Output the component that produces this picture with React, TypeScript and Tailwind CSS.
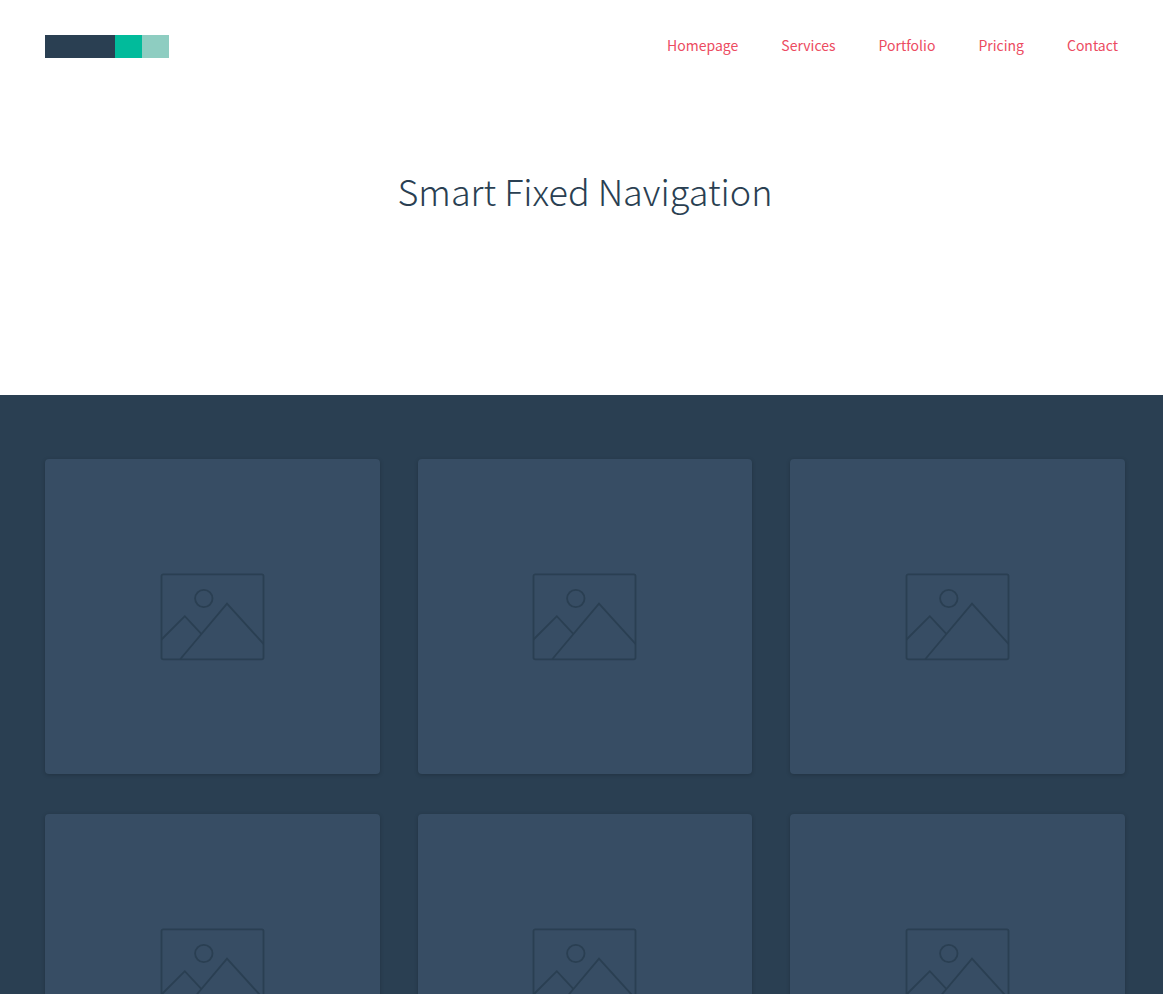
const links = ["Homepage", "Services", "Portfolio", "Pricing", "Contact"];
const cards = [1, 2, 3, 4, 5, 6];

function Placeholder() {
  return (
    <svg
      className="h-[88px] w-[105px] text-[#2a3f52]"
      viewBox="0 0 105 88"
      fill="none"
      stroke="currentColor"
      strokeWidth="1.8"
      aria-hidden="true"
    >
      <rect x="1.5" y="1.3" width="102" height="85" rx="1.8" />
      <circle cx="43.8" cy="25.5" r="8.7" />
      <path d="M1.5 66.5 24.8 43.2 41.3 60.8" />
      <path d="M20.4 86 67 30.6 103.5 70.8" />
    </svg>
  );
}

export default function App() {
  return (
    <div className="h-screen overflow-x-hidden overflow-y-auto bg-[#2a3f52] font-['Noto_Sans_CJK_SC','Noto_Sans',sans-serif] [scrollbar-width:none]">
      <div className="h-[395px] bg-white antialiased">
        <header className="flex h-[92px] items-center justify-between px-[45px]">
          <a href="#home" aria-label="Home" className="flex h-[23px]">
            <span className="w-[70px] bg-[#2a3f52]" />
            <span className="w-[27px] bg-[#01bb9b]" />
            <span className="w-[27px] bg-[#8ecdc1]" />
          </a>
          <nav aria-label="Main" className="flex gap-[43px] pb-0.5">
            {links.map((label) => (
              <a key={label} href={"#" + label.toLowerCase()} className="text-[14px] leading-6 text-[#ec4b61]">
                {label}
              </a>
            ))}
          </nav>
        </header>
        <h1 className="pt-[68px] pr-[38px] pl-[45px] text-center text-[36px] leading-[60px] font-light text-[#2a3f52]">
          Smart Fixed Navigation
        </h1>
      </div>
      <main className="pt-16 pr-[38px] pb-16 pl-[45px]">
        <ul className="grid grid-cols-3 gap-x-[38px] gap-y-10">
          {cards.map((id) => (
            <li
              key={id}
              className="flex h-[315px] items-center justify-center rounded bg-[#374d64] shadow-[0_1px_4px_rgba(0,0,0,0.2)]"
            >
              <Placeholder />
            </li>
          ))}
        </ul>
      </main>
    </div>
  );
}
